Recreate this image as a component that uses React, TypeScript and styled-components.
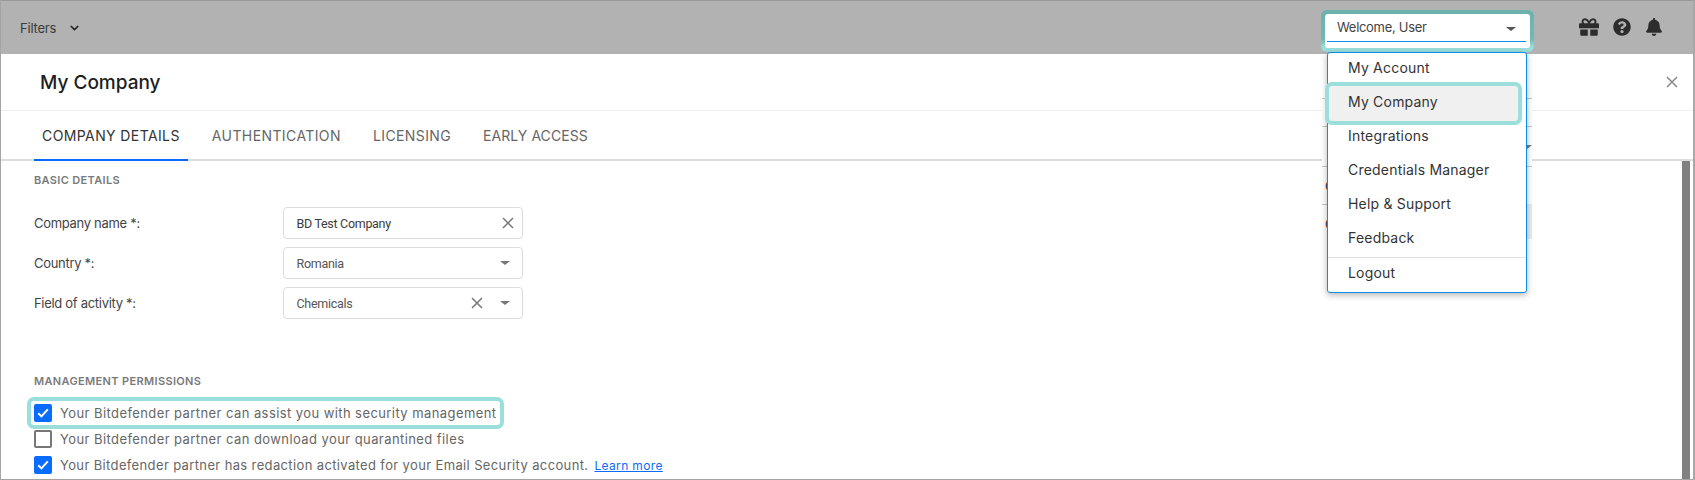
import React from 'react'
import styled, { createGlobalStyle } from 'styled-components'
import { FaGift, FaQuestionCircle, FaBell } from 'react-icons/fa'

const GlobalStyle = createGlobalStyle`
  html, body {
    margin: 0;
    padding: 0;
    background: #fff;
  }
  * {
    box-sizing: border-box;
  }
`

const Frame = styled.div`
  position: relative;
  width: 1695px;
  height: 480px;
  overflow: hidden;
  border-top: 1px solid #999;
  border-left: 1px solid #a4a4a4;
  border-right: 2px solid #a8a8a8;
  border-bottom: 1px solid #a4a4a4;
  font-family: Inter, "Liberation Sans", sans-serif;
  color: #444;
  background: #fff;
`

const TopBar = styled.header`
  height: 53px;
  background: #b2b2b2;
  display: flex;
  align-items: center;
  padding: 0 30px 0 19px;
`

const FiltersButton = styled.div`
  display: flex;
  align-items: center;
  gap: 14px;
  font-size: 13px;
  letter-spacing: -0.2px;
  color: #3a3a3a;
  flex: 1;
`

const WelcomeRing = styled.div`
  align-self: flex-start;
  margin-top: 9px;
  width: 213px;
  height: 42px;
  padding: 4px;
  border-radius: 6px;
  background: linear-gradient(#6bb1ad 0, #72b8b4 70%, #9adfdb 88%);
`

const WelcomeInner = styled.div`
  height: 34px;
  background: #fff;
  border-radius: 3px;
  padding: 0 4px 0 2px;
`

const WelcomeSelect = styled.div`
  height: 28px;
  display: flex;
  align-items: center;
  justify-content: space-between;
  border-bottom: 1px solid #0a8fe8;
  padding: 0 10px 2px 10px;
  font-size: 13px;
  letter-spacing: -0.3px;
  color: #444;
`

const Caret = styled.span<{ $color?: string }>`
  width: 0;
  height: 0;
  border-left: 5px solid transparent;
  border-right: 5px solid transparent;
  border-top: 4.5px solid ${p => p.$color || '#555'};
`

const WelcomeCaret = styled(Caret)`
  margin-top: 5px;
`

const BarIcons = styled.div`
  display: flex;
  align-items: center;
  gap: 14px;
  margin: 0 0 2px 45px;
  color: #2c2c2c;
`

const Modal = styled.main`
  background: #fff;
`

const ModalHeader = styled.div`
  height: 57px;
  display: flex;
  align-items: center;
  justify-content: space-between;
  padding: 0 15px 1px 39px;
  border-bottom: 1px solid #eee;
`

const Title = styled.h1`
  margin: 1px 0 0;
  font-size: 19px;
  font-weight: 500;
  color: #1e1e1e;
`

const Tabs = styled.nav`
  height: 50px;
  display: flex;
  gap: 16px;
  padding-left: 33px;
  border-bottom: 2px solid #ddd;
`

const Tab = styled.div<{ $active?: boolean; $spacing?: number }>`
  height: 50px;
  padding: 0 8px 0;
  display: flex;
  align-items: center;
  font-size: 14px;
  letter-spacing: ${p => p.$spacing ?? 0.4}px;
  color: ${p => (p.$active ? '#333' : '#666')};
  border-bottom: 2px solid ${p => (p.$active ? '#0a6cff' : 'transparent')};
`

const Body = styled.section`
  position: relative;
  height: 318px;
  padding: 12px 0 0 33px;
`

const Scrollbar = styled.div`
  position: absolute;
  top: 0;
  bottom: 0;
  right: 3px;
  width: 8px;
  background: #808080;
`

const SectionTitle = styled.h2<{ $gap: number }>`
  margin: 0 0 ${p => p.$gap}px;
  font-size: 11px;
  line-height: 14px;
  font-weight: 600;
  letter-spacing: 0.35px;
  color: #7a7a7a;
`

const FormGrid = styled.div`
  display: grid;
  grid-template-columns: 248.5px 240px;
  row-gap: 8px;
  align-items: center;
  margin-bottom: 55px;
`

const Label = styled.label`
  font-size: 13px;
  letter-spacing: -0.3px;
  color: #444;
`

const Field = styled.div`
  height: 32px;
  display: flex;
  align-items: center;
  border: 1px solid #ddd;
  border-radius: 4px;
  padding: 0 12px 0 13px;
  font-family: Roboto, "Liberation Sans", sans-serif;
  font-size: 12.5px;
  letter-spacing: -0.3px;
  color: #555;
`

const FieldValue = styled.span<{ $strong?: boolean }>`
  flex: 1;
  color: ${p => (p.$strong ? '#3c3c3c' : '#555')};
`

const ClearIcon = styled.svg<{ $gap: number }>`
  width: 12px;
  height: 12px;
  margin-right: ${p => p.$gap}px;
`

const CheckList = styled.div`
  display: flex;
  flex-direction: column;
  align-items: flex-start;
  gap: 8px;
`

const CheckRow = styled.div<{ $ring?: boolean }>`
  position: relative;
  display: inline-flex;
  align-items: center;
  height: 18px;
  gap: 8px;
  font-size: 13px;
  letter-spacing: 0.42px;
  color: #666;
  &::before {
    content: ${p => (p.$ring ? '""' : 'none')};
    position: absolute;
    top: -7px;
    bottom: -7px;
    left: -7px;
    right: -8px;
    border: 4px solid #9adfdb;
    border-radius: 7px;
  }
`

const LongText = styled.span`
  letter-spacing: 0.365px;
`

const Box = styled.span<{ $checked?: boolean }>`
  width: 18px;
  height: 18px;
  flex: none;
  display: flex;
  align-items: center;
  justify-content: center;
  border-radius: 2px;
  background: ${p => (p.$checked ? '#0a6cff' : '#fff')};
  border: ${p => (p.$checked ? 'none' : '2px solid #777')};
`

const LearnMore = styled.a`
  margin-left: 6px;
  color: #0a6cff;
  font-size: 12px;
  letter-spacing: 0.35px;
  text-decoration: underline;
`

const BehindPanel = styled.div`
  position: absolute;
  left: 1321px;
  top: 97px;
  width: 210px;
  height: 145px;
  background: #fff;
`

const BehindRow = styled.div<{ $height: number }>`
  height: ${p => p.$height}px;
  border-top: 1px solid #c4c4c4;
  position: relative;
  font-size: 13px;
  padding-left: 3px;
  display: flex;
  align-items: center;
  justify-content: space-between;
  color: #333;
`

const BehindShade = styled.div`
  position: absolute;
  right: 0;
  top: 106px;
  width: 6px;
  height: 35px;
  background: #ececec;
`

const Menu = styled.div`
  position: absolute;
  left: 1326px;
  top: 51px;
  width: 200px;
  height: 241px;
  background: #fff;
  isolation: isolate;
  border: 1px solid #0a8fe8;
  border-radius: 3px;
  box-shadow: 0 2px 6px rgba(0, 0, 0, 0.3);
  display: flex;
  flex-direction: column;
  gap: 4px;
`

const MenuItem = styled.div<{ $current?: boolean; $last?: boolean }>`
  position: relative;
  height: 30px;
  margin-top: ${p => (p.$last ? '-4px' : '0')};
  display: flex;
  align-items: center;
  padding: 0 0 2px 20px;
  font-size: 14px;
  letter-spacing: 0.2px;
  color: #333;
  &::before {
    content: ${p => (p.$current ? '""' : 'none')};
    position: absolute;
    z-index: -1;
    top: -5px;
    bottom: -8px;
    left: -3px;
    right: 4px;
    background: #f0f0f0;
    border: 4px solid #9adfdb;
    border-radius: 7px;
  }
`

const MenuDivider = styled.div`
  height: 1px;
  background: #e2e2e2;
`

const Cross: React.FC<{ color: string }> = ({ color }) => (
  <path d="M1 1 L11 11 M11 1 L1 11" stroke={color} strokeWidth="1.5" fill="none" />
)

const Tick: React.FC = () => (
  <svg width="12" height="10" viewBox="0 0 12 10">
    <path d="M1.2 5.2 L4.4 8.4 L10.8 1.4" stroke="#fff" strokeWidth="2" fill="none" />
  </svg>
)

const menuItems = ['My Account', 'My Company', 'Integrations', 'Credentials Manager', 'Help & Support', 'Feedback']

const App: React.FC = () => {
  return (
    <Frame>
      <GlobalStyle />
      <TopBar>
        <FiltersButton>
          Filters
          <svg width="9" height="6" viewBox="0 0 9 6">
            <path d="M0.8 1 L4.5 4.6 L8.2 1" stroke="#222" strokeWidth="1.7" fill="none" />
          </svg>
        </FiltersButton>
        <WelcomeRing>
          <WelcomeInner>
            <WelcomeSelect>
              Welcome, User
              <WelcomeCaret />
            </WelcomeSelect>
          </WelcomeInner>
        </WelcomeRing>
        <BarIcons>
          <FaGift size={20} />
          <FaQuestionCircle size={18} />
          <FaBell size={18} />
        </BarIcons>
      </TopBar>

      <Modal>
        <ModalHeader>
          <Title>My Company</Title>
          <svg width="12" height="12" viewBox="0 0 12 12">
            <Cross color="#888" />
          </svg>
        </ModalHeader>
        <Tabs>
          <Tab $active>COMPANY DETAILS</Tab>
          <Tab>AUTHENTICATION</Tab>
          <Tab>LICENSING</Tab>
          <Tab $spacing={0.05}>EARLY ACCESS</Tab>
        </Tabs>
        <Body>
          <SectionTitle $gap={20}>BASIC DETAILS</SectionTitle>
          <FormGrid>
            <Label>Company name *:</Label>
            <Field>
              <FieldValue $strong>BD Test Company</FieldValue>
              <ClearIcon $gap={-4} viewBox="0 0 12 12">
                <Cross color="#777" />
              </ClearIcon>
            </Field>
            <Label>Country *:</Label>
            <Field>
              <FieldValue>Romania</FieldValue>
              <Caret $color="#777" />
            </Field>
            <Label>Field of activity *:</Label>
            <Field>
              <FieldValue>Chemicals</FieldValue>
              <ClearIcon $gap={17} viewBox="0 0 12 12">
                <Cross color="#777" />
              </ClearIcon>
              <Caret $color="#777" />
            </Field>
          </FormGrid>
          <SectionTitle $gap={16}>MANAGEMENT PERMISSIONS</SectionTitle>
          <CheckList>
            <CheckRow $ring>
              <Box $checked>
                <Tick />
              </Box>
              Your Bitdefender partner can assist you with security management
            </CheckRow>
            <CheckRow>
              <Box />
              Your Bitdefender partner can download your quarantined files
            </CheckRow>
            <CheckRow>
              <Box $checked>
                <Tick />
              </Box>
              <LongText>
                Your Bitdefender partner has redaction activated for your Email Security account.
                <LearnMore href="#">Learn more</LearnMore>
              </LongText>
            </CheckRow>
          </CheckList>
          <Scrollbar />
        </Body>
      </Modal>

      <BehindPanel>
        <BehindRow $height={28} />
        <BehindRow $height={40}>
          <span />
          <Caret $color="#777" />
        </BehindRow>
        <BehindRow $height={38}>Company</BehindRow>
        <BehindRow $height={38}>Contact</BehindRow>
        <BehindShade />
      </BehindPanel>

      <Menu>
        {menuItems.map(item => (
          <MenuItem key={item} $current={item === 'My Company'}>
            {item}
          </MenuItem>
        ))}
        <MenuDivider />
        <MenuItem $last>Logout</MenuItem>
      </Menu>
    </Frame>
  )
}

export default App
